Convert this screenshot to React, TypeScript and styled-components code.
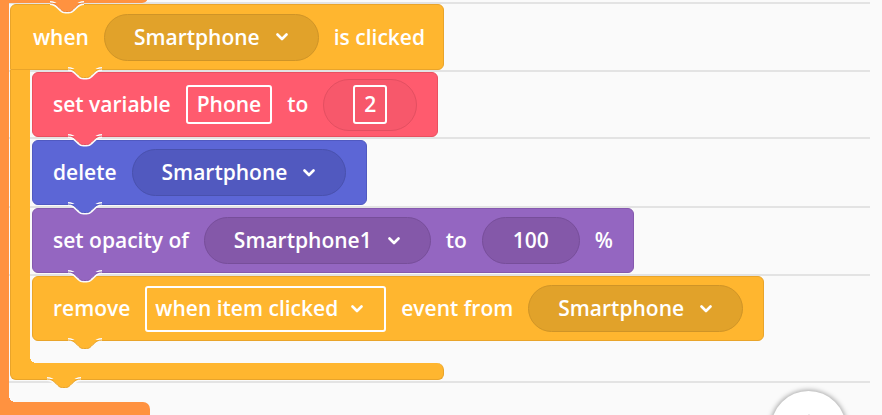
import React from 'react';
import styled, { createGlobalStyle } from 'styled-components';

const GlobalStyle = createGlobalStyle`
  html, body {
    margin: 0;
    padding: 0;
    background: #fafafa;
  }
  body {
    overflow: hidden;
    font-family: 'Open Sans', 'Noto Sans', sans-serif;
  }
`;

const palette = {
  orange: { fill: '#ff9240', edge: '#ec8232' },
  yellow: { fill: '#ffb62f', edge: '#e9a42a', well: '#e1a22a', wellEdge: '#cf9427' },
  red: { fill: '#ff5b6e', edge: '#e9505f', well: '#f7586b', wellEdge: '#e34f61' },
  blue: { fill: '#5c66d6', edge: '#5059c1', well: '#5159bf', wellEdge: '#4951ad' },
  purple: { fill: '#9466c1', edge: '#8559ae', well: '#8458a9', wellEdge: '#774e9a' },
};

type Tone = { fill: string; edge: string; well?: string; wellEdge?: string };

const Workspace = styled.div`
  position: relative;
  width: 882px;
  height: 415px;
  overflow: hidden;
  background: #fafafa;
`;

const Guides = styled.div`
  position: absolute;
  top: 0;
  left: 0;
  width: 870px;
  display: flex;
  flex-direction: column;
`;

const Guide = styled.div<{ $h: number }>`
  flex-shrink: 0;
  height: ${({ $h }) => $h}px;
  border-bottom: 2px solid #e3e3e3;
`;

const Script = styled.div`
  position: absolute;
  top: -26px;
  left: 0;
  display: flex;
  flex-direction: column;
`;

const OuterTop = styled.div`
  position: relative;
  width: 148px;
  height: 29px;
  background: ${palette.orange.fill};
  border-radius: 0 0 6px 0;
`;

const OuterBody = styled.div`
  display: flex;
`;

const OuterSpine = styled.div`
  width: 9px;
  flex-shrink: 0;
  background: ${palette.orange.fill};
`;

const OuterSlot = styled.div`
  padding: 1px 0 22px 1px;
`;

const OuterBottom = styled.div`
  position: relative;
  width: 150px;
  height: 30px;
  background: ${palette.orange.fill};
  border-radius: 0 7px 0 0;

  &::before {
    content: '';
    position: absolute;
    top: -6px;
    left: 9px;
    width: 6px;
    height: 6px;
    background: radial-gradient(circle at 100% 0, transparent 6px, ${palette.orange.fill} 6px);
  }
`;

const CBlock = styled.div<{ $w: number }>`
  position: relative;
  width: ${({ $w }) => $w}px;
  display: flex;
  flex-direction: column;
`;

const CHeader = styled.div<{ $tone: Tone }>`
  position: relative;
  box-sizing: border-box;
  height: 66px;
  display: flex;
  align-items: center;
  gap: 15px;
  padding: 0 20px 0 22px;
  background: ${({ $tone }) => $tone.fill};
  border: 1px solid ${({ $tone }) => $tone.edge};
  border-radius: 6px 6px 6px 0;
`;

const CMiddle = styled.div`
  display: flex;
`;

const CSpine = styled.div<{ $tone: Tone }>`
  width: 20px;
  flex-shrink: 0;
  box-sizing: border-box;
  background: ${({ $tone }) => $tone.fill};
  border-left: 1px solid ${({ $tone }) => $tone.edge};
`;

const Stack = styled.div`
  display: flex;
  flex-direction: column;
  align-items: flex-start;
  gap: 3px;
  padding: 2px 0 22px 2px;
`;

const CFooter = styled.div<{ $tone: Tone }>`
  position: relative;
  box-sizing: border-box;
  height: 17px;
  background: ${({ $tone }) => $tone.fill};
  border: 1px solid ${({ $tone }) => $tone.edge};
  border-top: none;
  border-radius: 0 7px 6px 6px;

  &::before {
    content: '';
    position: absolute;
    top: -6px;
    left: 19px;
    width: 6px;
    height: 6px;
    background: radial-gradient(circle at 100% 0, transparent 6px, ${({ $tone }) => $tone.fill} 6px);
  }
`;

const Block = styled.div<{ $tone: Tone }>`
  position: relative;
  flex-shrink: 0;
  box-sizing: border-box;
  height: 65px;
  display: flex;
  align-items: center;
  gap: 15px;
  padding: 0 20px;
  background: ${({ $tone }) => $tone.fill};
  border: 1px solid ${({ $tone }) => $tone.edge};
  border-radius: 6px;
`;

const Label = styled.span`
  color: #fff;
  font-size: 21px;
  font-weight: 600;
  line-height: 1;
  white-space: nowrap;
`;

const Dropdown = styled.div<{ $tone: Tone }>`
  flex-shrink: 0;
  box-sizing: border-box;
  height: 47px;
  display: flex;
  align-items: center;
  gap: 16px;
  padding: 0 30px 0 29px;
  background: ${({ $tone }) => $tone.well};
  border: 1px solid ${({ $tone }) => $tone.wellEdge};
  border-radius: 24px;
`;

const NumberWell = styled.div<{ $tone: Tone; $h: number; $pad: number }>`
  flex-shrink: 0;
  box-sizing: border-box;
  height: ${({ $h }) => $h}px;
  display: flex;
  align-items: center;
  padding: 0 ${({ $pad }) => $pad}px;
  background: ${({ $tone }) => $tone.well};
  border: 1px solid ${({ $tone }) => $tone.wellEdge};
  border-radius: 26px;
`;

const Field = styled.div<{ $h: number; $pad: number }>`
  flex-shrink: 0;
  box-sizing: border-box;
  height: ${({ $h }) => $h}px;
  display: flex;
  align-items: center;
  gap: 13px;
  padding: 0 ${({ $pad }) => $pad}px;
  border: 2px solid #fff;
  border-radius: 3px;
`;

const TabSvg = styled.svg<{ $left: number }>`
  position: absolute;
  left: ${({ $left }) => $left}px;
  bottom: -10px;
  z-index: 2;
  overflow: visible;
`;

const FabButton = styled.div`
  position: absolute;
  left: 771px;
  top: 391px;
  width: 75px;
  height: 75px;
  border-radius: 50%;
  background: #fff;
  box-shadow: 0 0 5px 1px rgba(0, 0, 0, 0.35);
  display: flex;
  align-items: center;
  justify-content: center;
`;

const tabPath =
  'M0 1 C4 1 6 2.5 9 5.5 L11 7.5 C12.5 9 13.5 9.5 15.5 9.5 L18.5 9.5 C20.5 9.5 21.5 9 23 7.5 L25 5.5 C28 2.5 30 1 34 1';

const Tab = ({ left, tone }: { left: number; tone: Tone }) => (
  <TabSvg $left={left} width="34" height="11" viewBox="0 0 34 11">
    <path d={tabPath} fill="none" stroke="#fafafa" strokeWidth="4" />
    <path d={tabPath} fill={tone.fill} stroke={tone.edge} strokeWidth="1" />
  </TabSvg>
);

const Chevron = () => (
  <svg width="12" height="8" viewBox="0 0 12 8">
    <path d="M1.5 1.5 L6 6 L10.5 1.5" fill="none" stroke="#fff" strokeWidth="2.6" strokeLinecap="round" strokeLinejoin="round" />
  </svg>
);

const Select = ({ text, tone }: { text: string; tone: Tone }) => (
  <Dropdown $tone={tone}>
    <Label>{text}</Label>
    <Chevron />
  </Dropdown>
);

const guideHeights = [2, 66, 65, 67, 66, 105];

export default function App() {
  return (
    <Workspace>
      <GlobalStyle />
      <Guides>
        {guideHeights.map((h, i) => (
          <Guide key={i} $h={h} />
        ))}
      </Guides>

      <Script>
        <OuterTop>
          <Tab left={50} tone={palette.orange} />
        </OuterTop>
        <OuterBody>
          <OuterSpine />
          <OuterSlot>
            <CBlock $w={434}>
              <CHeader $tone={palette.yellow}>
                <Label>when</Label>
                <Select text="Smartphone" tone={palette.yellow} />
                <Label>is clicked</Label>
                <Tab left={57} tone={palette.yellow} />
              </CHeader>
              <CMiddle>
                <CSpine $tone={palette.yellow} />
                <Stack>
                  <Block $tone={palette.red}>
                    <Label>set variable</Label>
                    <Field $h={39} $pad={9}>
                      <Label>Phone</Label>
                    </Field>
                    <Label>to</Label>
                    <NumberWell $tone={palette.red} $h={52} $pad={29}>
                      <Field $h={39} $pad={9}>
                        <Label>2</Label>
                      </Field>
                    </NumberWell>
                    <Tab left={35} tone={palette.red} />
                  </Block>
                  <Block $tone={palette.blue}>
                    <Label>delete</Label>
                    <Select text="Smartphone" tone={palette.blue} />
                    <Tab left={35} tone={palette.blue} />
                  </Block>
                  <Block $tone={palette.purple}>
                    <Label>set opacity of</Label>
                    <Select text="Smartphone1" tone={palette.purple} />
                    <Label>to</Label>
                    <NumberWell $tone={palette.purple} $h={47} $pad={30}>
                      <Label>100</Label>
                    </NumberWell>
                    <Label>%</Label>
                    <Tab left={35} tone={palette.purple} />
                  </Block>
                  <Block $tone={palette.yellow}>
                    <Label>remove</Label>
                    <Field $h={46} $pad={8}>
                      <Label>when item clicked</Label>
                      <Chevron />
                      <span />
                    </Field>
                    <Label>event from</Label>
                    <Select text="Smartphone" tone={palette.yellow} />
                    <Tab left={35} tone={palette.yellow} />
                  </Block>
                </Stack>
              </CMiddle>
              <CFooter $tone={palette.yellow}>
                <Tab left={36} tone={palette.yellow} />
              </CFooter>
            </CBlock>
          </OuterSlot>
        </OuterBody>
        <OuterBottom />
      </Script>

      <FabButton>
        <svg width="30" height="30" viewBox="0 0 30 30">
          <path d="M15 2 V28 M2 15 H28" stroke="#555" strokeWidth="2.5" strokeLinecap="round" />
        </svg>
      </FabButton>
    </Workspace>
  );
}
